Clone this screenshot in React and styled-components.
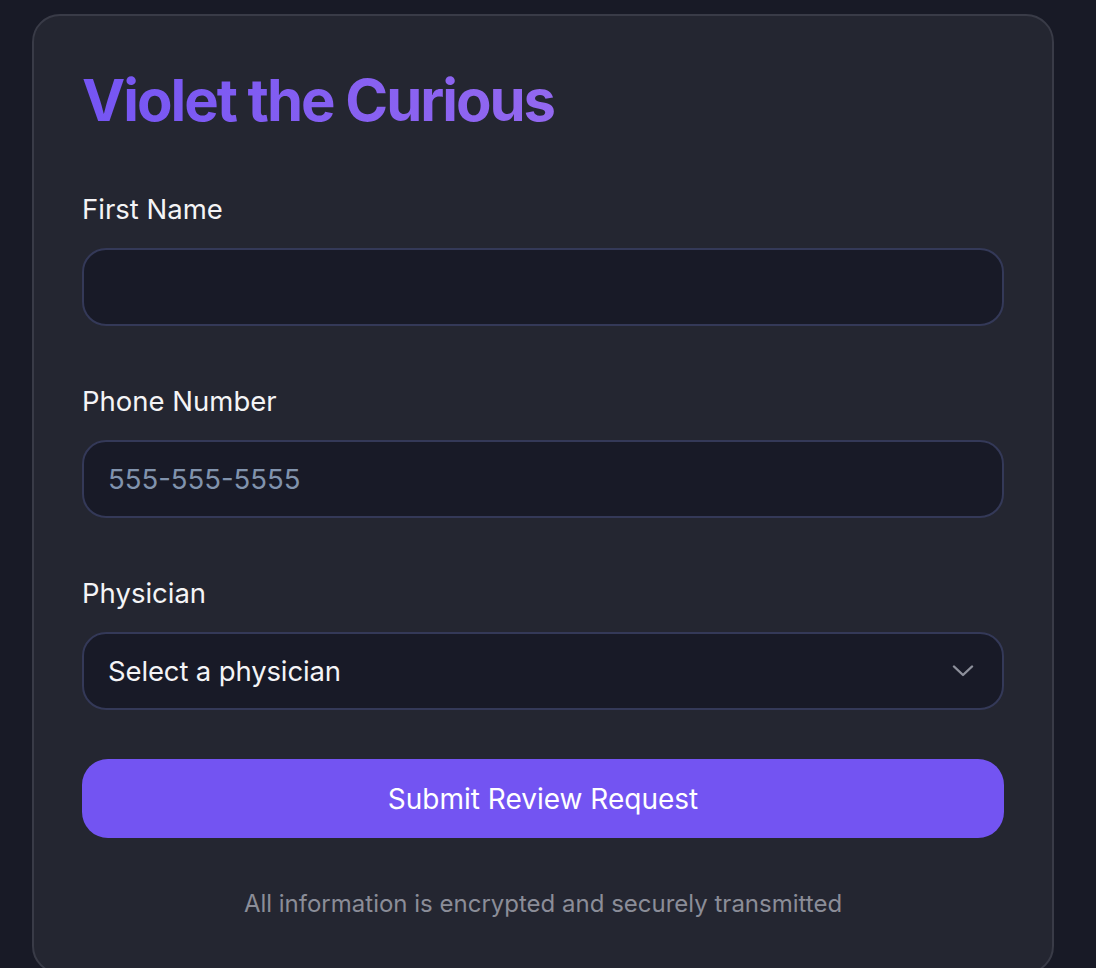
import React from "react";
import styled, { createGlobalStyle } from "styled-components";

const GlobalStyle = createGlobalStyle`
  html, body {
    margin: 0;
    padding: 0;
    background: #181a26;
  }
  body {
    font-family: Inter, "Noto Sans", sans-serif;
    -webkit-font-smoothing: antialiased;
  }
`;

const Page = styled.div`
  min-height: 968px;
  padding: 14px 42px 0 32px;
  box-sizing: border-box;
`;

const Card = styled.section`
  background: #242631;
  border: 2px solid #393b47;
  border-radius: 28px;
  padding: 50px 48px 48px 48px;
  box-sizing: border-box;
  width: 1022px;
  height: 960px;
`;

const Title = styled.h1`
  margin: 0 0 59px 0;
  font-size: 58px;
  line-height: 68px;
  font-weight: 700;
  letter-spacing: -0.035em;
  background: linear-gradient(90deg, #7555f3 0%, #9368f0 100%);
  -webkit-background-clip: text;
  background-clip: text;
  color: transparent;
  width: fit-content;
`;

const Fields = styled.div`
  display: flex;
  flex-direction: column;
  gap: 59px;
`;

const Field = styled.div`
  display: flex;
  flex-direction: column;
  gap: 23px;
`;

const Label = styled.label`
  color: #f4f4f6;
  font-size: 27.5px;
  line-height: 32px;
  font-weight: 400;
`;

const Input = styled.input`
  height: 78px;
  box-sizing: border-box;
  background: #181a27;
  border: 2px solid #343958;
  border-radius: 24px;
  padding: 0 24px;
  color: #f4f4f6;
  font-family: inherit;
  font-size: 27.5px;
  outline: none;

  &::placeholder {
    color: #8193ad;
  }
`;

const SelectBox = styled.div`
  height: 78px;
  box-sizing: border-box;
  background: #181a27;
  border: 2px solid #343958;
  border-radius: 24px;
  padding: 0 28px 0 24px;
  display: flex;
  align-items: center;
  justify-content: space-between;
  color: #f4f4f6;
  font-size: 27.5px;
  letter-spacing: -0.005em;
`;

const Chevron = styled.svg`
  width: 22px;
  height: 12px;
  color: #8d909b;
`;

const SubmitButton = styled.button`
  display: block;
  width: 100%;
  height: 79px;
  margin-top: 49px;
  border: none;
  border-radius: 26px;
  background: #7354f2;
  color: #ffffff;
  font-family: inherit;
  font-size: 28px;
  font-weight: 400;
  cursor: pointer;
`;

const Note = styled.p`
  margin: 51px 0 0 0;
  text-align: center;
  color: #8b8d98;
  font-size: 24px;
  line-height: 30px;
`;

const App = () => {
  return (
    <>
      <GlobalStyle />
      <Page>
        <Card>
          <Title>Violet the Curious</Title>

          <Fields>
            <Field>
              <Label htmlFor="first-name">First Name</Label>
              <Input id="first-name" type="text" />
            </Field>

            <Field>
              <Label htmlFor="phone">Phone Number</Label>
              <Input id="phone" type="tel" placeholder="555-555-5555" />
            </Field>

            <Field>
              <Label>Physician</Label>
              <SelectBox>
                <span>Select a physician</span>
                <Chevron viewBox="0 0 22 12" fill="none">
                  <path
                    d="M2 1.5 L11 10 L20 1.5"
                    stroke="currentColor"
                    strokeWidth="2.4"
                    strokeLinecap="round"
                    strokeLinejoin="round"
                  />
                </Chevron>
              </SelectBox>
            </Field>
          </Fields>

          <SubmitButton type="button">Submit Review Request</SubmitButton>

          <Note>All information is encrypted and securely transmitted</Note>
        </Card>
      </Page>
    </>
  );
};

export default App;
